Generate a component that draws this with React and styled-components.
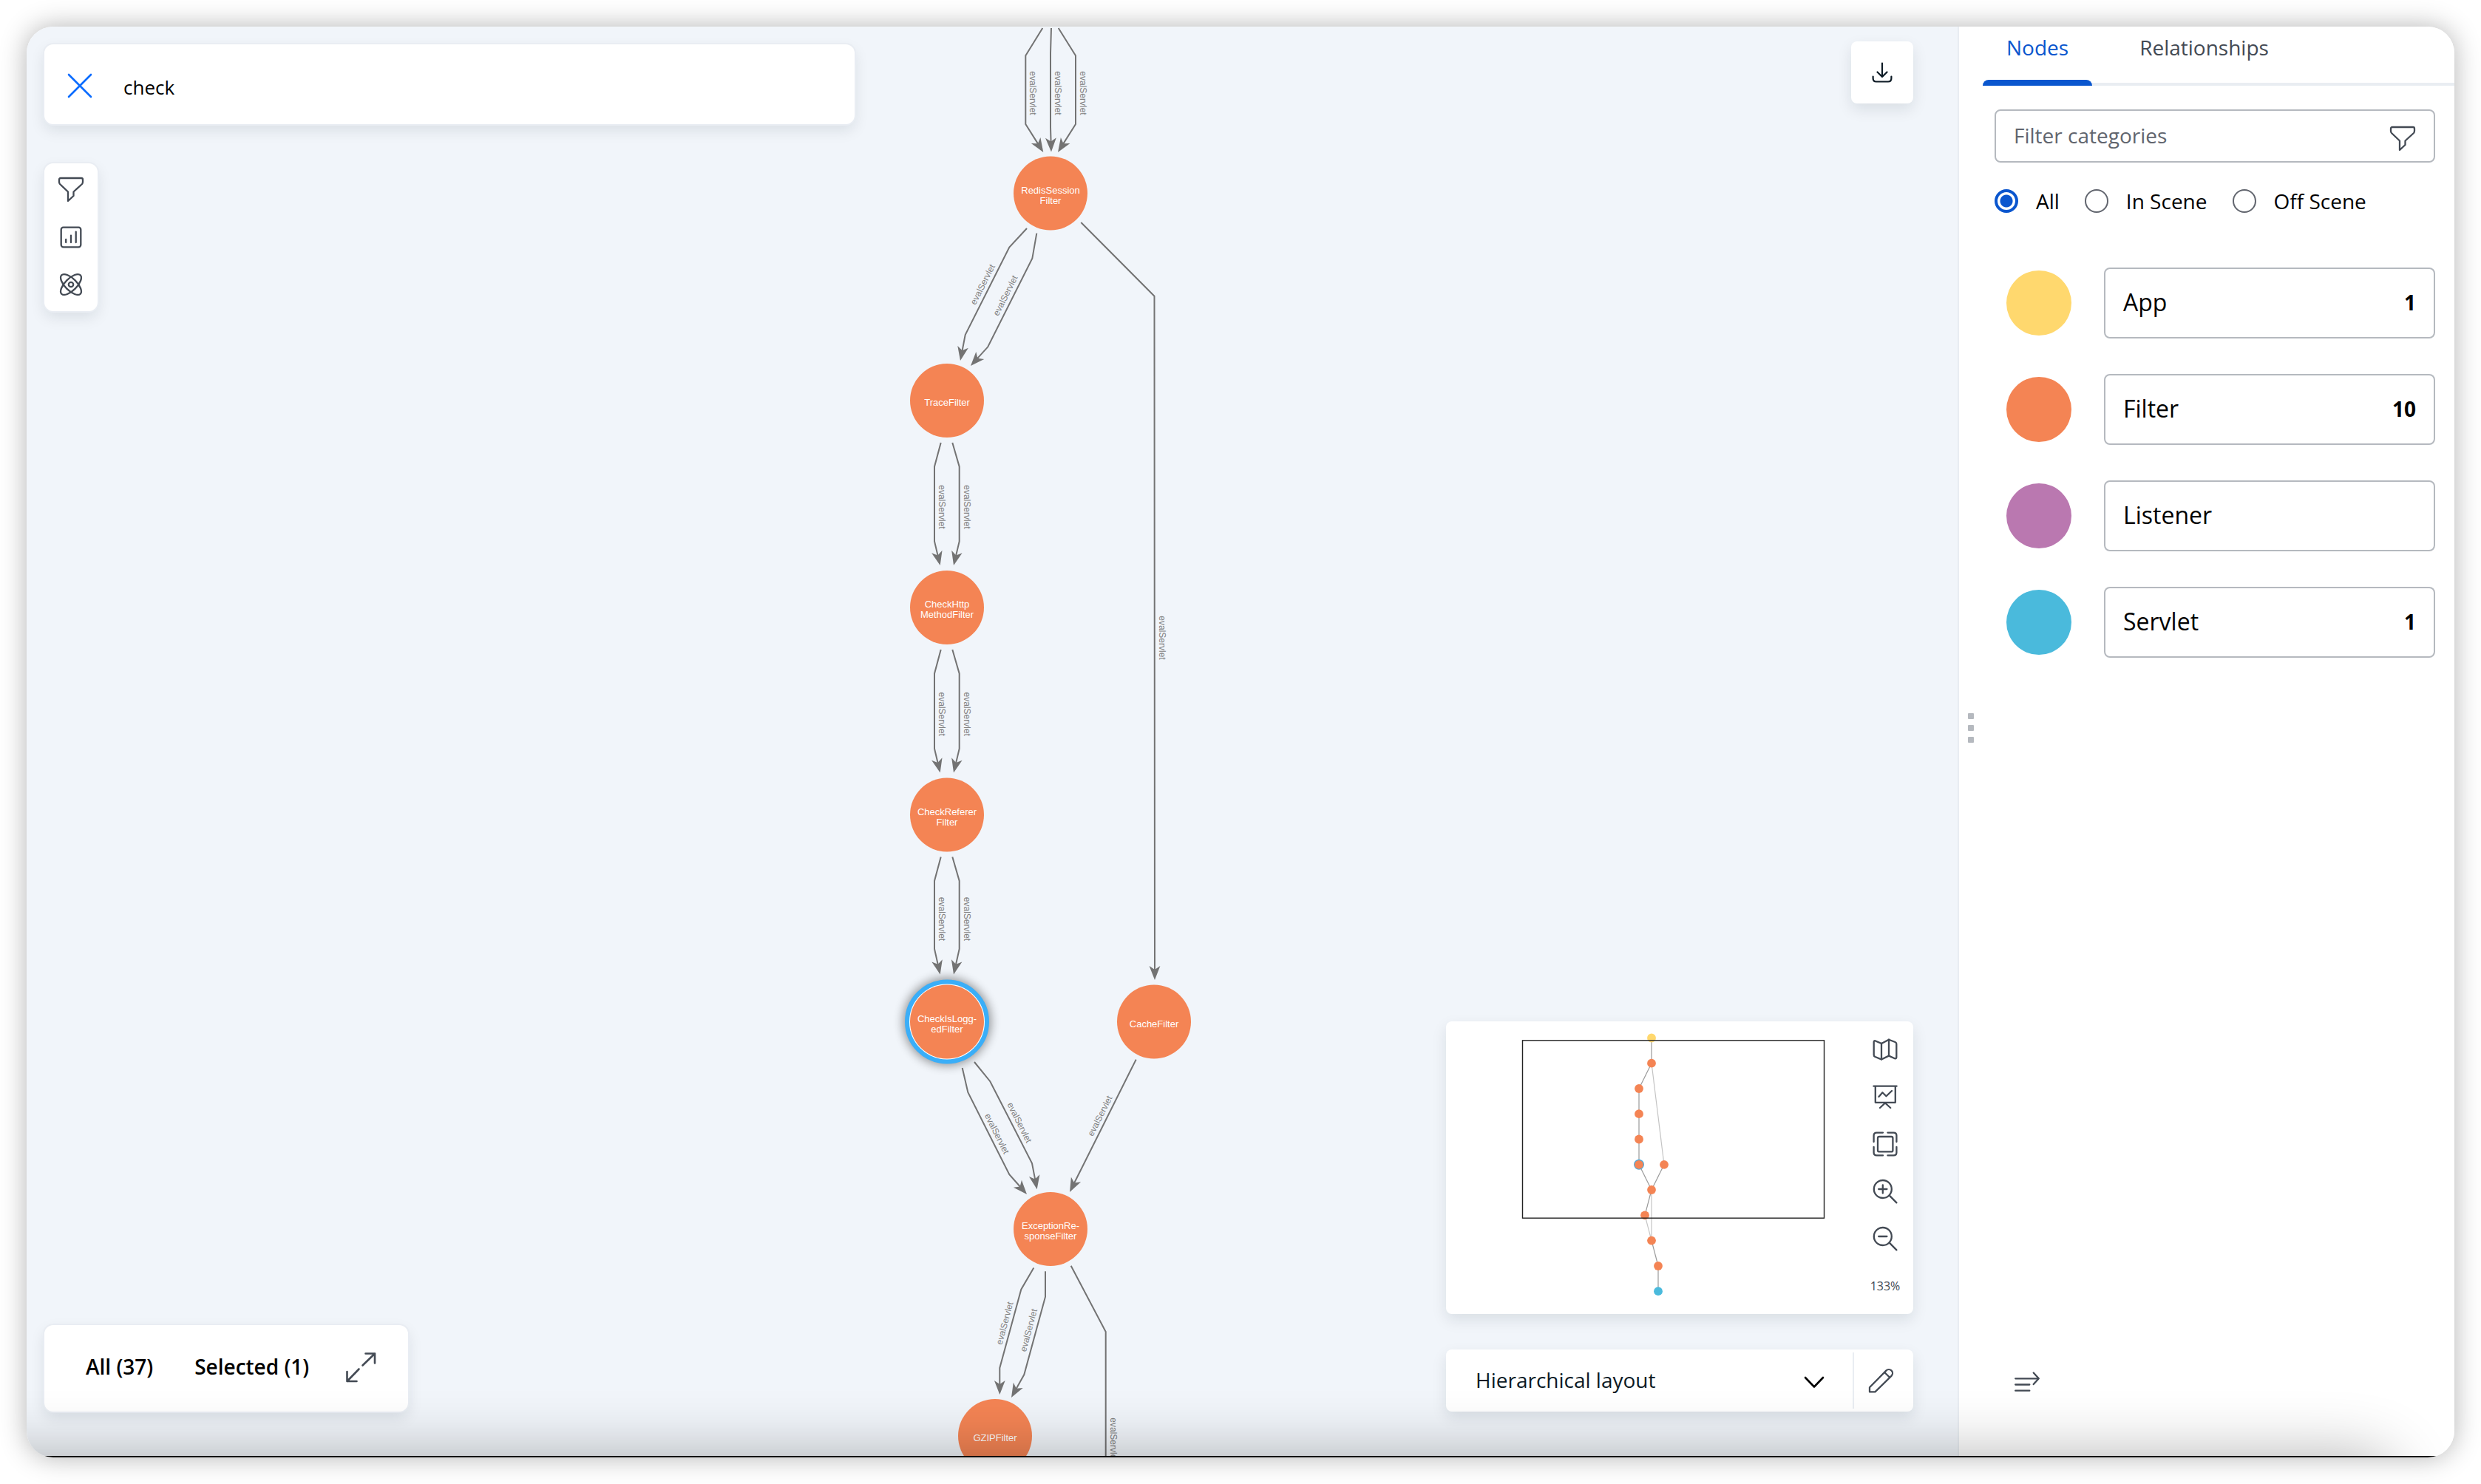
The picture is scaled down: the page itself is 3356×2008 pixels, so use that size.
import React, { useState } from "react";
import styled, { createGlobalStyle } from "styled-components";

const color = {
  ink: "#0c1a25",
  icon: "#434a54",
  muted: "#61656e",
  line: "#e9edf2",
  border: "#b5b9bf",
  blue: "#0a56ce",
  canvas: "#f1f5fa",
  app: "#ffd86e",
  filter: "#f48454",
  listener: "#ba78b0",
  servlet: "#4abadc",
  edge: "#737373",
};

const GlobalStyle = createGlobalStyle`
  *, *::before, *::after { box-sizing: border-box; }
  body {
    margin: 0;
    background: #fff;
    color: #000;
    font-family: "Open Sans", "Noto Sans", sans-serif;
    font-size: 28px;
    line-height: 36px;
  }
  button, input, select { font: inherit; color: inherit; }
`;

/* ---------- window ---------- */

const Page = styled.div`
  display: flex;
  min-height: 100vh;
  padding: 36px;
`;

const Window = styled.div`
  flex: 1;
  display: flex;
  flex-direction: column;
  min-width: 0;
  overflow: hidden;
  border-radius: 36px;
  background: #fff;
  box-shadow: 0 0 36px rgba(0, 0, 0, 0.3);
`;

const Body = styled.div`
  flex: 1;
  display: flex;
  min-height: 0;
`;

const BottomEdge = styled.div`
  position: relative;
  height: 2px;
  background: #0b0b0b;
  pointer-events: none;
  &::before {
    content: "";
    position: absolute;
    top: 0;
    left: -120px;
    right: 84px;
    height: 240px;
    border-radius: 40px;
    box-shadow: 0 0 84px rgba(0, 0, 0, 0.3);
  }
`;

/* ---------- canvas ---------- */

const Canvas = styled.main`
  position: relative;
  flex: 1;
  display: flex;
  min-width: 0;
  background: ${color.canvas};
`;

const GraphSvg = styled.svg`
  position: absolute;
  inset: 0;
  width: 100%;
  height: 100%;
  font-family: "Liberation Sans", Arial, sans-serif;
`;

const Overlay = styled.div`
  position: relative;
  flex: 1;
  display: flex;
  justify-content: space-between;
  gap: 24px;
  padding: 20px 60px 60px 24px;
`;

const Column = styled.div`
  display: flex;
  flex-direction: column;
  align-items: ${(p) => (p.$end ? "flex-end" : "flex-start")};
  flex: 0 1 ${(p) => (p.$end ? "632px" : "1096px")};
  gap: ${(p) => (p.$end ? "48px" : "53px")};
  padding-top: ${(p) => (p.$end ? "0" : "4px")};
`;

const Card = styled.section`
  background: #fff;
  border-radius: ${(p) => (p.$tight ? "8px" : "12px")};
  box-shadow: ${(p) => (p.$tight ? "" : "0 0 0 2px #e9edf3,")} 0 8px 20px
    rgba(12, 26, 37, 0.1);
`;

const IconButton = styled.button`
  display: grid;
  place-items: center;
  flex: none;
  width: ${(p) => p.$size || 36}px;
  height: ${(p) => p.$size || 36}px;
  padding: 0;
  border: 0;
  background: none;
  color: ${(p) => p.$tone || color.icon};
  cursor: pointer;
`;

const SearchCard = styled(Card)`
  display: flex;
  align-items: center;
  gap: 41px;
  width: 100%;
  height: 108px;
  padding: 4px 32px 0 30px;
`;

const SearchInput = styled.input`
  flex: 1;
  min-width: 0;
  padding: 4px 0 0;
  border: 0;
  outline: 0;
  background: none;
  font-size: 26px;
`;

const Toolbar = styled(Card)`
  display: flex;
  flex-direction: column;
  gap: 28px;
  padding: 18px;
`;

const StatusCard = styled(Card)`
  display: flex;
  align-items: center;
  gap: 48px;
  height: 117px;
  margin-top: auto;
  padding: 0 42px 4px 56px;
`;

const StatusLinks = styled.div`
  display: flex;
  gap: 56px;
  padding-bottom: 2px;
`;

const StatusButton = styled.button`
  padding: 0;
  border: 0;
  background: none;
  font-weight: 600;
  white-space: nowrap;
  cursor: pointer;
`;

const MiniCard = styled(Card)`
  display: flex;
  justify-content: space-between;
  width: 100%;
  height: 396px;
  margin-top: auto;
`;

const MiniSvg = styled.svg`
  flex: none;
  width: 540px;
  height: 396px;
`;

const MiniTools = styled.div`
  display: flex;
  flex-direction: column;
  align-items: center;
  gap: 28px;
  width: 72px;
  margin-right: 2px;
  padding-top: 20px;
  color: ${color.icon};
`;

const Zoom = styled.output`
  font-size: 16px;
  line-height: 36px;
`;

const LayoutCard = styled(Card)`
  display: flex;
  align-items: center;
  width: 100%;
  height: 84px;
`;

const SelectBox = styled.div`
  flex: 1;
  display: grid;
  align-items: center;
  > * { grid-area: 1 / 1; }
  > svg {
    justify-self: end;
    margin: 4px 38px 0 0;
    pointer-events: none;
  }
`;

const Select = styled.select`
  width: 100%;
  height: 84px;
  padding: 0 80px 2px 40px;
  border: 0;
  background: none;
  color: ${color.ink};
  appearance: none;
`;

const EditCell = styled.div`
  display: grid;
  place-items: center;
  width: 82px;
  height: 76px;
  padding-right: 8px;
  border-left: 2px solid ${color.line};
`;

/* ---------- side panel ---------- */

const Side = styled.aside`
  flex: none;
  display: flex;
  width: 672px;
  border-left: 2px solid ${color.line};
  background: #fff;
`;

const Handle = styled.div`
  display: flex;
  flex-direction: column;
  justify-content: center;
  align-items: center;
  gap: 8px;
  width: 32px;
  padding-bottom: 36px;
  cursor: col-resize;
  span {
    width: 8px;
    height: 8px;
    border-radius: 1px;
    background: ${color.border};
  }
`;

const SideContent = styled.div`
  flex: 1;
  display: flex;
  flex-direction: column;
  min-width: 0;
`;

const Tabs = styled.div`
  display: flex;
  gap: 32px;
  height: 80px;
  box-shadow: inset 0 -4px ${color.line};
`;

const Tab = styled.button`
  display: flex;
  flex-direction: column;
  justify-content: space-between;
  padding: 10px 0 0;
  border: 0;
  background: none;
  color: ${(p) => (p.$active ? color.blue : color.icon)};
  font-weight: 500;
  cursor: pointer;
  span { padding: 0 32px; }
  &::after {
    content: "";
    align-self: stretch;
    height: 8px;
    border-radius: 8px 8px 0 0;
    background: ${(p) => (p.$active ? color.blue : "transparent")};
  }
`;

const PanelBody = styled.div`
  flex: 1;
  display: flex;
  flex-direction: column;
  padding: 32px 26px 82px 16px;
`;

const FilterField = styled.div`
  display: flex;
  align-items: flex-end;
  height: 72px;
  padding: 0 24px 12px;
  border: 2px solid ${color.border};
  border-radius: 8px;
`;

const FilterInput = styled.input`
  flex: 1;
  min-width: 0;
  height: 46px;
  padding: 0;
  border: 0;
  outline: 0;
  background: none;
  &::placeholder { color: ${color.muted}; opacity: 1; }
`;

const Radios = styled.div`
  display: flex;
  gap: 34px;
  margin: 36px 0 74px;
`;

const RadioLabel = styled.label`
  display: flex;
  align-items: center;
  gap: 24px;
  line-height: 32px;
`;

const Radio = styled.input`
  appearance: none;
  width: 32px;
  height: 32px;
  margin: 0;
  border: 2px solid ${color.muted};
  border-radius: 50%;
  background: #fff;
  &:checked {
    border: 4px solid ${color.blue};
    background: radial-gradient(circle, ${color.blue} 8px, #fff 9px);
  }
`;

const Categories = styled.ul`
  display: flex;
  flex-direction: column;
  gap: 48px;
  margin: 0;
  padding: 0;
  list-style: none;
`;

const Category = styled.li`
  display: flex;
  align-items: center;
  gap: 44px;
  padding-left: 16px;
`;

const Swatch = styled.span`
  flex: none;
  width: 88px;
  height: 88px;
  border-radius: 50%;
  background: ${(p) => p.$fill};
`;

const CategoryButton = styled.button`
  flex: 1;
  display: flex;
  align-items: center;
  justify-content: space-between;
  height: 96px;
  padding: 0 24px 2px;
  border: 2px solid ${color.border};
  border-radius: 8px;
  background: #fff;
  font-size: 32px;
  cursor: pointer;
  strong { font-size: 28px; font-weight: 700; }
`;

const PanelFooter = styled.footer`
  margin-top: auto;
  padding-left: 26px;
`;

/* ---------- icons ---------- */

function Icon({ box = 36, width = 2.3, children }) {
  return (
    <svg
      width={box}
      height={box}
      viewBox={`0 0 ${box} ${box}`}
      fill="none"
      stroke="currentColor"
      strokeWidth={width}
      strokeLinecap="round"
      strokeLinejoin="round"
      aria-hidden="true"
    >
      {children}
    </svg>
  );
}

const FunnelIcon = () => (
  <Icon>
    <path d="M4 2H32Q34 2 34 4V7Q34 9 33 10L21.5 20.5V26L14 33V20.5L3 10Q2 9 2 7V4Q2 2 4 2Z" />
  </Icon>
);
const ChartIcon = () => (
  <Icon>
    <rect x="4.7" y="4.7" width="26.6" height="26.6" rx="3" />
    <path d="M11.2 21V25M18 15.6V25M24.7 10.6V25" />
  </Icon>
);
const AtomIcon = () => (
  <Icon>
    <ellipse cx="18" cy="18" rx="18" ry="8" transform="rotate(45 18 18)" />
    <ellipse cx="18" cy="18" rx="18" ry="8" transform="rotate(-45 18 18)" />
    <circle cx="18" cy="18" r="3.2" />
  </Icon>
);
const CloseIcon = () => (
  <Icon width={2.6}>
    <path d="M3 3L33 33M33 3L3 33" />
  </Icon>
);
const DownloadIcon = () => (
  <Icon box={28} width={2.2}>
    <path d="M14 1.5V20M7.5 13.5L14 20L20.5 13.5" />
    <path d="M1.6 19.5V22Q1.6 26.5 6 26.5H22Q26.4 26.5 26.4 22V19.5" />
  </Icon>
);
const ExpandIcon = () => (
  <Icon box={44} width={2.6}>
    <path d="M28.5 3.5H41V16.5M41 3.5L24.5 19.5" />
    <path d="M3.5 28V41H16.5M3.5 41L19.5 24.5" />
  </Icon>
);
const MapIcon = () => (
  <Icon>
    <path d="M2.7 8Q2.7 5.6 5 6.5L13 10L23 4.7L31.5 8Q33.3 8.8 33.3 10.5V28.5Q33.3 31 31 30.2L23 26.6L13 31.5L4.5 28Q2.7 27.2 2.7 25.5Z" />
    <path d="M13 10V31.5M23 4.7V26.6" />
  </Icon>
);
const BoardIcon = () => (
  <Icon>
    <path d="M2.4 3.7H33.6M4.8 3.7V25.8H31.8V3.7" />
    <path d="M18 26.5L11 33M18 26.5L25.2 33M9.4 18L14.4 12.3L19.5 17.3L27 10" />
  </Icon>
);
const FitIcon = () => (
  <Icon>
    <rect x="8" y="8" width="20.4" height="20.4" rx="2" />
    <path d="M2.6 15V6.5Q2.6 2.6 6.5 2.6H15M21.4 2.6H29.5Q33.4 2.6 33.4 6.5V15M33.4 22V29.5Q33.4 33.4 29.5 33.4H21.4M15 33.4H6.5Q2.6 33.4 2.6 29.5V22" />
  </Icon>
);
const ZoomIcon = ({ plus }) => (
  <Icon>
    <circle cx="14.8" cy="15" r="12" />
    <path d="M23.8 23.6L33.4 33.4M9.2 15H20.4" />
    {plus && <path d="M14.8 9.4V20.6" />}
  </Icon>
);
const ChevronIcon = () => (
  <Icon box={28} width={2.6}>
    <path d="M2 8L14 20.5L26 8" />
  </Icon>
);
const PencilIcon = () => (
  <Icon>
    <path d="M3 33.4V27.2L25.3 4.6A4.9 4.9 0 0 1 32.6 11.6L10.4 33.4Z" />
    <path d="M23.2 7L30.2 13.8" />
  </Icon>
);
const CollapseIcon = () => (
  <Icon>
    <path d="M2.2 13.3H33.8M26.7 5.5L33.8 13.3L26.7 21.1M2.2 21.5H21.3M2.2 29.7H21.3" />
  </Icon>
);

/* ---------- graph ---------- */

const nodes = [
  { x: 1385, y: 225.5, lines: ["RedisSession", "Filter"] },
  { x: 1245, y: 506, lines: ["TraceFilter"] },
  { x: 1245, y: 786, lines: ["CheckHttp", "MethodFilter"] },
  { x: 1245, y: 1066.5, lines: ["CheckReferer", "Filter"] },
  { x: 1245, y: 1346.5, lines: ["CheckIsLogg-", "edFilter"], selected: true },
  { x: 1525, y: 1346.5, lines: ["CacheFilter"] },
  { x: 1385, y: 1627, lines: ["ExceptionRe-", "sponseFilter"] },
  { x: 1310, y: 1907, lines: ["GZIPFilter"] },
];

// Two parallel edges that leave one node and enter the node below it.
function pair(fromY, toY, selected) {
  const bend = selected ? 98.5 : 89.5;
  const tip = selected ? 64 : 57;
  const labelY = (fromY + toY) / 2 + (selected ? 1 : 4);
  return [
    {
      points: [[1236.7, fromY + 57], [1228, fromY + 89.5], [1228, toY - bend], [1235.7, toY - tip]],
      label: [1238, labelY, 90],
    },
    {
      points: [[1252.3, fromY + 57], [1261.7, fromY + 89.5], [1261.7, toY - bend], [1254, toY - tip]],
      label: [1272, labelY, 90],
    },
  ];
}

const edges = [
  { points: [[1374.3, 2], [1351.3, 39.3], [1351.3, 132], [1375.3, 170]], label: [1361, 90, 90] },
  { points: [[1386, 2], [1385, 36], [1385, 136], [1386, 169.5]], label: [1395, 90, 90] },
  { points: [[1395.7, 2], [1419, 39.3], [1419, 132], [1395, 170]], label: [1429, 90, 90] },
  { points: [[1353, 273], [1329.3, 298.6], [1269.7, 417], [1263, 452]], label: [1293.3, 349, -63.4] },
  { points: [[1366.3, 279.7], [1360.3, 313.8], [1300.3, 433.3], [1277, 459]], label: [1324, 364, -63.4] },
  { points: [[1426.3, 265], [1525.5, 364.7], [1526, 1290]], label: [1535.5, 827, 90] },
  ...pair(506, 786),
  ...pair(786, 1066.5),
  ...pair(1066.5, 1346.5, true),
  { points: [[1265.7, 1409], [1273.3, 1442], [1329.3, 1553.2], [1353, 1580]], label: [1312.5, 1498, 63.4] },
  { points: [[1282, 1401], [1303.3, 1427.2], [1360, 1538], [1366.7, 1573.2]], label: [1343, 1483, 63.4] },
  { points: [[1500.7, 1397.6], [1411, 1577]], label: [1452, 1474, -63.4] },
  { points: [[1362.3, 1679.6], [1345.3, 1708.7], [1316.3, 1815], [1316.3, 1851]], label: [1323, 1754.5, -75] },
  { points: [[1378, 1684.3], [1378, 1718.7], [1349.3, 1824], [1332, 1855]], label: [1355.5, 1764, -75] },
  { points: [[1412.7, 1676.7], [1459.7, 1766], [1459.7, 1990]], label: [1469.5, 1912, 90], open: true },
];

function Edge({ points, label, open }) {
  const [px, py] = points[points.length - 2];
  const [tx, ty] = points[points.length - 1];
  const angle = Math.atan2(ty - py, tx - px);
  const end = open ? [tx, ty] : [tx - 12 * Math.cos(angle), ty - 12 * Math.sin(angle)];
  const line = [...points.slice(0, -1), end].map((p) => p.join(",")).join(" ");
  return (
    <g>
      <polyline points={line} fill="none" stroke={color.edge} strokeWidth="2" />
      {!open && (
        <path
          d="M0 0L-19 -7.4L-14 0L-19 7.4Z"
          fill={color.edge}
          transform={`translate(${tx} ${ty}) rotate(${(angle * 180) / Math.PI})`}
        />
      )}
      <text
        transform={`translate(${label[0]} ${label[1]}) rotate(${label[2]})`}
        y="4"
        fontSize="12"
        fill="#808080"
        textAnchor="middle"
      >
        evalServlet
      </text>
    </g>
  );
}

function Node({ x, y, lines, selected }) {
  return (
    <g transform={`translate(${x} ${y})`}>
      {selected && (
        <>
          <circle r="59" fill="#000" opacity="0.42" filter="url(#glow)" />
          <circle r="54" fill="#fff" stroke="#3aaef8" strokeWidth="6" />
        </>
      )}
      <circle r="50" fill={color.filter} />
      {lines.map((line, i) => (
        <text
          key={line}
          y={lines.length === 1 ? 7 : i * 14}
          fontSize="13"
          fill="#fff"
          textAnchor="middle"
        >
          {line}
        </text>
      ))}
    </g>
  );
}

function Graph() {
  return (
    <GraphSvg role="img" aria-label="Servlet filter graph">
      <defs>
        <filter id="glow" x="-50%" y="-50%" width="200%" height="200%">
          <feGaussianBlur stdDeviation="7" />
        </filter>
      </defs>
      {edges.map((edge, i) => (
        <Edge key={i} {...edge} />
      ))}
      {nodes.map((node) => (
        <Node key={node.lines.join("")} {...node} />
      ))}
    </GraphSvg>
  );
}

const miniNodes = [
  [278, 22.5, color.app],
  [278, 56.7, color.filter],
  [261, 91, color.filter],
  [261, 125.2, color.filter],
  [261, 159.5, color.filter],
  [261, 193.8, color.filter],
  [295, 193.8, color.filter],
  [278, 228, color.filter],
  [269, 262.3, color.filter],
  [278, 296.6, color.filter],
  [287, 331, color.filter],
  [287, 365.2, color.servlet],
];
const miniEdges = [[0, 1], [1, 2], [2, 3], [3, 4], [4, 5], [5, 7], [6, 7], [7, 8], [9, 10], [10, 11]];
const faintMiniEdges = [[1, 6], [7, 9], [8, 9]];

function MiniEdge({ from, to, faint }) {
  const [x1, y1] = miniNodes[from];
  const [x2, y2] = miniNodes[to];
  return <line x1={x1} y1={y1} x2={x2} y2={y2} stroke={faint ? "#c4c4c4" : "#999"} strokeWidth="1.2" />;
}

function MiniMap() {
  return (
    <MiniSvg viewBox="0 0 540 396" role="img" aria-label="Overview">
      {miniEdges.map(([a, b]) => (
        <MiniEdge key={`${a}-${b}`} from={a} to={b} />
      ))}
      {faintMiniEdges.map(([a, b]) => (
        <MiniEdge key={`${a}-${b}`} from={a} to={b} faint />
      ))}
      <circle cx="261" cy="193.8" r="7" fill="#4aa9dd" />
      {miniNodes.map(([x, y, fill], i) => (
        <circle key={i} cx={x} cy={y} r="5.9" fill={fill} />
      ))}
      <rect x="103.5" y="25.8" width="408" height="240.4" fill="none" stroke="#222" strokeWidth="1.4" />
    </MiniSvg>
  );
}

/* ---------- app ---------- */

const categories = [
  { name: "App", count: 1, fill: color.app },
  { name: "Filter", count: 10, fill: color.filter },
  { name: "Listener", fill: color.listener },
  { name: "Servlet", count: 1, fill: color.servlet },
];

const scopes = ["All", "In Scene", "Off Scene"];

export default function App() {
  const [query, setQuery] = useState("check");
  const [scope, setScope] = useState("All");
  const [tab, setTab] = useState("Nodes");

  return (
    <>
      <GlobalStyle />
      <Page>
        <Window>
          <Body>
            <Canvas>
              <Graph />
              <Overlay>
                <Column>
                  <SearchCard>
                    <IconButton $tone="#0a6cff" aria-label="Clear search" onClick={() => setQuery("")}>
                      <CloseIcon />
                    </IconButton>
                    <SearchInput
                      aria-label="Search"
                      value={query}
                      onChange={(e) => setQuery(e.target.value)}
                    />
                  </SearchCard>
                  <Toolbar>
                    <IconButton aria-label="Filter"><FunnelIcon /></IconButton>
                    <IconButton aria-label="Statistics"><ChartIcon /></IconButton>
                    <IconButton aria-label="Algorithms"><AtomIcon /></IconButton>
                  </Toolbar>
                  <StatusCard>
                    <StatusLinks>
                      <StatusButton>All (37)</StatusButton>
                      <StatusButton>Selected (1)</StatusButton>
                    </StatusLinks>
                    <IconButton $size={44} aria-label="Expand"><ExpandIcon /></IconButton>
                  </StatusCard>
                </Column>
                <Column $end>
                  <Card $tight>
                    <IconButton $size={84} $tone={color.ink} aria-label="Download">
                      <DownloadIcon />
                    </IconButton>
                  </Card>
                  <MiniCard $tight>
                    <MiniMap />
                    <MiniTools>
                      <IconButton aria-label="Toggle map"><MapIcon /></IconButton>
                      <IconButton aria-label="Presentation"><BoardIcon /></IconButton>
                      <IconButton aria-label="Fit to screen"><FitIcon /></IconButton>
                      <IconButton aria-label="Zoom in"><ZoomIcon plus /></IconButton>
                      <IconButton aria-label="Zoom out"><ZoomIcon /></IconButton>
                      <Zoom>133%</Zoom>
                    </MiniTools>
                  </MiniCard>
                  <LayoutCard $tight>
                    <SelectBox>
                      <Select aria-label="Layout">
                        <option>Hierarchical layout</option>
                      </Select>
                      <ChevronIcon />
                    </SelectBox>
                    <EditCell>
                      <IconButton aria-label="Edit layout"><PencilIcon /></IconButton>
                    </EditCell>
                  </LayoutCard>
                </Column>
              </Overlay>
            </Canvas>
            <Side>
              <Handle>
                <span />
                <span />
                <span />
              </Handle>
              <SideContent>
                <Tabs role="tablist">
                  {["Nodes", "Relationships"].map((name) => (
                    <Tab
                      key={name}
                      role="tab"
                      aria-selected={tab === name}
                      $active={tab === name}
                      onClick={() => setTab(name)}
                    >
                      <span>{name}</span>
                    </Tab>
                  ))}
                </Tabs>
                <PanelBody>
                  <FilterField>
                    <FilterInput aria-label="Filter categories" placeholder="Filter categories" />
                    <IconButton aria-label="Apply filter"><FunnelIcon /></IconButton>
                  </FilterField>
                  <Radios role="radiogroup" aria-label="Scope">
                    {scopes.map((name) => (
                      <RadioLabel key={name}>
                        <Radio
                          type="radio"
                          name="scope"
                          checked={scope === name}
                          onChange={() => setScope(name)}
                        />
                        {name}
                      </RadioLabel>
                    ))}
                  </Radios>
                  <Categories>
                    {categories.map(({ name, count, fill }) => (
                      <Category key={name}>
                        <Swatch $fill={fill} />
                        <CategoryButton>
                          {name}
                          {count && <strong>{count}</strong>}
                        </CategoryButton>
                      </Category>
                    ))}
                  </Categories>
                  <PanelFooter>
                    <IconButton aria-label="Collapse panel"><CollapseIcon /></IconButton>
                  </PanelFooter>
                </PanelBody>
              </SideContent>
            </Side>
          </Body>
          <BottomEdge />
        </Window>
      </Page>
    </>
  );
}
